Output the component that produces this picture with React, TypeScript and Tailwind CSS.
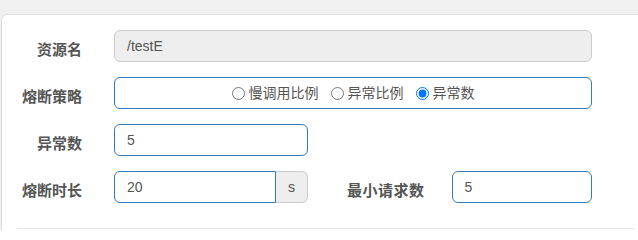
import React from "react";

const font = { fontFamily: '"Liberation Sans", Arial, "Noto Sans CJK SC", sans-serif' };

function Label({ children, w = "w-[80px]" }: { children: React.ReactNode; w?: string }) {
  return (
    <div className={`${w} shrink-0 pt-[6px] text-right text-[15px] font-bold text-[#555] leading-none`}>{children}</div>
  );
}

export default function App() {
  return (
    <div className="w-[638px] h-[230px] overflow-hidden bg-[#f0f0f0] pt-[14px]" style={font}>
      <div className="ml-px w-[700px] h-[300px] bg-white border-t border-l border-[#ddd] rounded-tl-[6px] pt-[15px]">
        <div className="flex flex-col gap-[15px]">
          <div className="flex items-center h-[32px] gap-[32px]">
            <Label>资源名</Label>
            <div className="w-[478px] h-[32px] rounded-[6px] border border-[#ccc] bg-[#eee] flex items-center px-[12px] text-[14px] text-[#555]">
              /testE
            </div>
          </div>
          <div className="flex items-center h-[32px] gap-[32px]">
            <Label>熔断策略</Label>
            <div className="w-[478px] h-[32px] rounded-[6px] border border-[#337ab7] bg-white flex items-center justify-center text-[14px] text-[#555]">
              <label className="flex items-center">
                <input type="radio" name="grade" readOnly className="m-0 mr-[4px] w-[13px] h-[13px]" />
                <span>慢调用比例</span>
              </label>
              <label className="flex items-center ml-[12px]">
                <input type="radio" name="grade" readOnly className="m-0 mr-[4px] w-[13px] h-[13px]" />
                <span>异常比例</span>
              </label>
              <label className="flex items-center ml-[12px]">
                <input type="radio" name="grade" defaultChecked className="m-0 mr-[4px] w-[13px] h-[13px]" />
                <span>异常数</span>
              </label>
            </div>
          </div>
          <div className="flex items-center h-[32px] gap-[32px]">
            <Label>异常数</Label>
            <div className="w-[194px] h-[32px] rounded-[6px] border border-[#337ab7] bg-white flex items-center px-[12px] text-[14px] text-[#555]">
              5
            </div>
          </div>
          <div className="flex items-center h-[32px]">
            <Label>熔断时长</Label>
            <div className="ml-[32px] flex h-[32px]">
              <div className="w-[162px] h-[32px] rounded-l-[6px] border border-[#337ab7] bg-white flex items-center px-[12px] text-[14px] text-[#555]">
                20
              </div>
              <div className="w-[32px] h-[32px] rounded-r-[6px] border border-l-0 border-[#ccc] bg-[#eee] flex items-center justify-center text-[14px] text-[#555]">
                s
              </div>
            </div>
            <div className="ml-[39px] pt-[6px] text-[15px] font-bold text-[#555] leading-none tracking-[0.5px]">最小请求数</div>
            <div className="ml-[27px] w-[140px] h-[32px] rounded-[6px] border border-[#337ab7] bg-white flex items-center px-[12px] text-[14px] text-[#555]">
              5
            </div>
          </div>
        </div>
        <div className="mt-[25px] ml-[15px] w-[617px] border-t border-[#e5e5e5]" />
      </div>
    </div>
  );
}
